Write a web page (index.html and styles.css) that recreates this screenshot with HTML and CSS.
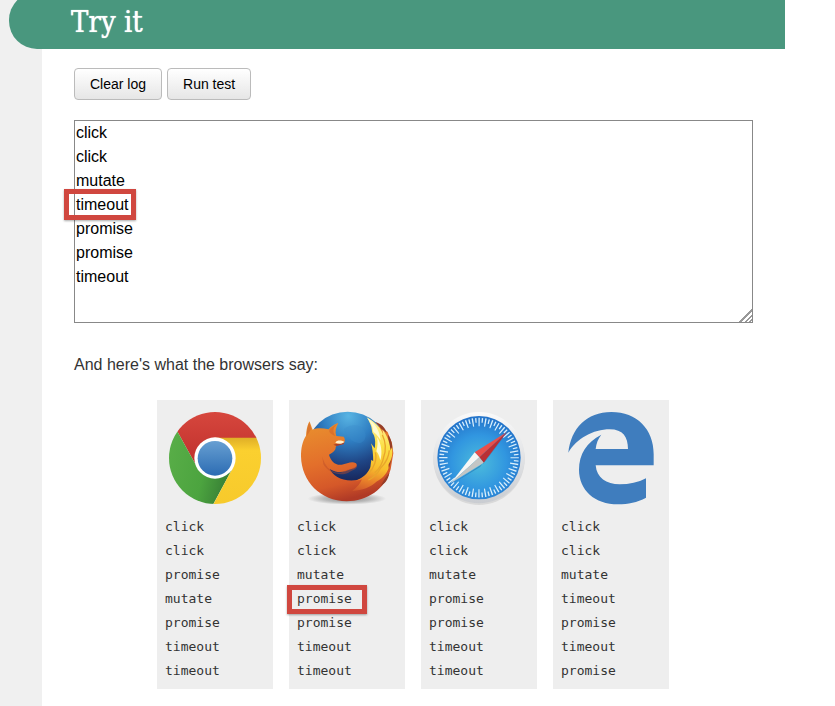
FILE: index.html
```html
<!DOCTYPE html>
<html lang="en">
<head>
<meta charset="utf-8">
<title>Try it</title>
<link rel="stylesheet" href="styles.css">
</head>
<body>
<main class="page">
  <h1 class="banner">Try it</h1>
  <div class="content">
    <div class="actions">
      <button type="button">Clear log</button>
      <button type="button">Run test</button>
    </div>
    <div class="log-wrap">
      <textarea class="log" aria-label="Event log" spellcheck="false">click
click
mutate
timeout
promise
promise
timeout</textarea>
      <span class="log-mark"></span>
    </div>
    <p class="intro">And here's what the browsers say:</p>
    <div class="browsers">
      <section class="browser">
        <svg class="logo" viewBox="24 24 300 300" role="img" aria-label="Chrome">
          <defs>
            <linearGradient id="cr" x1="0" y1="0" x2="0" y2="1"><stop offset="0" stop-color="#d9493f"/><stop offset="1" stop-color="#bd2e2b"/></linearGradient>
            <linearGradient id="cy" x1="0" y1="0" x2="0" y2="1"><stop offset="0" stop-color="#dfae27"/><stop offset=".18" stop-color="#fbd02f"/><stop offset="1" stop-color="#f6c92b"/></linearGradient>
            <linearGradient id="cg" x1="0" y1="0" x2="1" y2=".3"><stop offset="0" stop-color="#5cb04a"/><stop offset=".7" stop-color="#4ca43f"/><stop offset="1" stop-color="#3b8537"/></linearGradient>
            <linearGradient id="cb" x1="0" y1="0" x2="0" y2="1"><stop offset="0" stop-color="#679fd2"/><stop offset="1" stop-color="#2c6cb3"/></linearGradient>
            <clipPath id="cc"><circle cx="174" cy="174" r="138"/></clipPath>
          </defs>
          <g clip-path="url(#cc)">
            <path fill="url(#cr)" d="M20 20H330V114H174L122 205L62 96Z"/>
            <path fill="url(#cg)" d="M62 96L122 205L174 235L226 206L168 314H20V60Z"/>
            <path fill="url(#cy)" d="M174 113H330V330H160L226 206Z"/>
          </g>
          <circle cx="174" cy="174" r="62" fill="#fff"/>
          <circle cx="174" cy="175" r="52" fill="url(#cb)"/>
        </svg>
        <ol class="results"><li>click</li><li>click</li><li>promise</li><li>mutate</li><li>promise</li><li>timeout</li><li>timeout</li></ol>
      </section>
      <section class="browser">
        <svg class="logo" viewBox="24 24 300 300" role="img" aria-label="Firefox">
          <defs>
            <radialGradient id="fb" gradientUnits="userSpaceOnUse" cx="178" cy="48" r="190"><stop offset="0" stop-color="#58b4e3"/><stop offset=".4" stop-color="#2f7ec2"/><stop offset=".75" stop-color="#1f4585"/><stop offset="1" stop-color="#182a60"/></radialGradient>
            <linearGradient id="fo" gradientUnits="userSpaceOnUse" x1="90" y1="64" x2="150" y2="304"><stop offset="0" stop-color="#e98f2e"/><stop offset=".5" stop-color="#e36f2b"/><stop offset=".8" stop-color="#d55829"/><stop offset="1" stop-color="#b03a26"/></linearGradient>
            <linearGradient id="fy" gradientUnits="userSpaceOnUse" x1="275" y1="60" x2="225" y2="275"><stop offset="0" stop-color="#fff3a0"/><stop offset=".35" stop-color="#fbdf45"/><stop offset=".65" stop-color="#f8bd2c"/><stop offset=".85" stop-color="#e8802a"/><stop offset="1" stop-color="#d0582a"/></linearGradient>
            <radialGradient id="fs"><stop offset="0" stop-color="#888"/><stop offset=".6" stop-color="#bbb"/><stop offset="1" stop-color="#eee"/></radialGradient>
          </defs>
          <ellipse cx="174" cy="296" rx="118" ry="18" fill="url(#fs)"/>
          <ellipse cx="176" cy="146" rx="120" ry="111" fill="url(#fb)"/>
          <path fill="#3c8dca" opacity=".35" d="M165 88C182 72 207 72 222 86C234 100 232 122 216 128C196 134 172 112 165 88Z"/>
          <path fill="url(#fo)" d="M61 64C53 80 52 95 51 107C40 124 36 145 36 169C37 244 95 304 173 304C235 304 289 267 305 208L313 160L309 130L296 96L270 76L258 140C256 190 240 232 204 240C160 246 132 228 122 207C150 222 165 216 185 208C202 205 207 197 201 190C188 182 174 192 158 194C137 196 126 183 120 164C130 157 139 153 140 143C139 136 151 135 163 132C169 125 169 116 164 110L142 108C137 95 141 82 148 69C133 74 124 81 119 88C99 84 82 84 71 89C67 80 65 72 61 64Z"/>
          <path fill="#963d27" d="M259 66C277 72 288 82 293 98L280 90ZM297 104C307 116 312 135 309 157L299 132ZM302 180L308 168C307 184 303 198 297 207ZM287 236L301 218C298 238 288 251 276 256Z"/>
          <path fill="url(#fy)" d="M233 52C257 65 275 82 283 104L280 88C296 108 304 132 304 152L309 142C312 164 308 180 298 194L299 204C291 225 279 236 264 244C246 262 219 272 190 272C205 262 214 250 219 238C212 241 206 242 200 242C222 234 237 220 244 202L247 179L253 184C252 162 251 144 246 130L257 145C260 128 259 108 250 98L247 80C243 70 239 60 233 52Z"/>
          <path fill="#fffbd0" d="M235 54C259 70 272 92 275 121C267 107 258 99 253 96C252 81 246 67 235 54ZM264 111C277 130 281 158 274 181C270 165 266 158 262 154C266 140 267 125 264 111Z"/>
          <path fill="none" stroke="#e9a52b" stroke-width="4" d="M280 104C292 130 291 152 284 171C281 190 270 207 257 218M301 151C299 174 289 190 275 204C265 222 251 235 238 240M259 157C265 178 254 205 240 219"/>
          <path fill="#c5562a" d="M61 66L67 86 54 107C53 91 56 77 61 66ZM147 71C132 79 129 94 139 108C122 102 118 94 122 88C130 79 138 75 147 71Z" opacity=".4"/>
          <path fill="#a63c29" d="M133 134L163 127 165 132 143 138Z"/>
          <path fill="#fff0c9" d="M139 128C146 118 157 122 166 125C160 132 150 133 139 128Z"/>
          <path fill="#bb4b2b" d="M100 169C106 201 132 226 163 215C180 206 195 207 203 196C207 206 194 210 183 215C159 231 120 222 103 193Z" opacity=".45"/>
        </svg>
        <ol class="results"><li>click</li><li>click</li><li>mutate</li><li class="marked">promise</li><li>promise</li><li>timeout</li><li>timeout</li></ol>
      </section>
      <section class="browser">
        <svg class="logo" viewBox="24 24 300 300" role="img" aria-label="Safari">
          <defs>
            <radialGradient id="sb" cx=".5" cy=".56" r=".6"><stop offset="0" stop-color="#4cbcdc"/><stop offset=".55" stop-color="#3196e0"/><stop offset="1" stop-color="#216cc5"/></radialGradient>
            <linearGradient id="sr" x1="0" y1="0" x2="0" y2="1"><stop offset="0" stop-color="#fafafa"/><stop offset="1" stop-color="#c9ccd1"/></linearGradient>
          </defs>
          <circle cx="174" cy="178" r="137" fill="#c9c9c9" opacity=".55"/>
          <circle cx="174" cy="173" r="137" fill="url(#sr)"/>
          <circle cx="174" cy="173" r="125" fill="url(#sb)"/>
          <circle cx="174" cy="173" r="107" fill="none" stroke="#d9effc" stroke-width="25" pathLength="360" stroke-dasharray="2 8" stroke-dashoffset="1"/>
          <circle cx="174" cy="173" r="112" fill="none" stroke="#d9effc" stroke-width="14" pathLength="360" stroke-dasharray="2 8" stroke-dashoffset="-4"/>
          <path fill="#174f94" opacity=".4" d="M92 252L188 190L258 98L177 201Z"/>
          <path fill="#e84f4b" d="M258 96L161 157L175 172Z"/>
          <path fill="#b92f35" d="M258 96L175 172L188 188Z"/>
          <path fill="#f7f7f5" d="M89 250L161 157L175 172Z"/>
          <path fill="#c3c6c5" d="M89 250L175 172L188 188Z"/>
        </svg>
        <ol class="results"><li>click</li><li>click</li><li>mutate</li><li>promise</li><li>promise</li><li>timeout</li><li>timeout</li></ol>
      </section>
      <section class="browser">
        <svg class="logo" viewBox="24 24 300 300" role="img" aria-label="Edge">
          <path fill="#3f7dbe" fill-rule="evenodd" d="M46 158C54 85 101 36 175 36C252 36 302 88 302 162V196H128C131 234 160 253 200 253C229 253 256 247 279 235V293C252 307 226 313 195 313C125 313 78 270 78 209C78 163 101 126 145 104C135 116 130 130 128 147H225C225 111 210 88 170 88C121 88 70 116 46 158Z"/>
        </svg>
        <ol class="results"><li>click</li><li>click</li><li>mutate</li><li>timeout</li><li>promise</li><li>timeout</li><li>promise</li></ol>
      </section>
    </div>
  </div>
</main>
</body>
</html>
```
FILE: styles.css
```css
*,
*::after {
  box-sizing: border-box;
}

body {
  margin: 0;
  background: #f0f0f0;
  color: #333;
  font: 16px/24px "Liberation Sans", Arial, sans-serif;
}

.page {
  display: flow-root;
  min-height: 100vh;
  margin-left: 42px;
  background: #fff;
}

.banner {
  margin: -8px 50px 0 -33px;
  padding: 10px 0 6px 62px;
  border-radius: 28px 0 0 28px;
  background: #49977e;
  color: #fff;
  font: 29px/41px "DejaVu Serif Condensed", "DejaVu Serif", serif;
  text-shadow: 0 0 1px #fff;
}

.content {
  padding: 19px 82px 16px 32px;
}

.actions {
  display: flex;
  gap: 5px;
}

.actions button {
  height: 32px;
  padding: 0 15px;
  border: 1px solid #bbb;
  border-radius: 4px;
  background: linear-gradient(#fff, #e6e6e6);
  color: #000;
  font: 14px/20px "Liberation Sans", Arial, sans-serif;
}

.log-wrap {
  position: relative;
  margin-top: 20px;
}

.log {
  display: block;
  width: 100%;
  height: 203px;
  padding: 0 1px;
  border: 1px solid #888;
  border-radius: 0;
  background: #fff;
  color: #000;
  font: inherit;
  resize: both;
}

.log::-webkit-resizer {
  background: linear-gradient(135deg, #fff 12px, #999 12px 14px, #fff 14px 16px, #999 16px 17px, #fff 17px 19px, #999 19px 20px, #fff 20px);
}

.log-mark,
.marked::after {
  position: absolute;
  border: 5px solid #d0473f;
  box-shadow: 0 1px 2px #0005;
  pointer-events: none;
}

.log-mark {
  top: 69px;
  left: -10px;
  width: 72px;
  height: 31px;
}

.intro {
  margin: 30px 0 23px;
}

.browsers {
  display: flex;
  justify-content: center;
  gap: 16px;
  padding-right: 1px;
}

.browser {
  width: 116px;
  padding: 8px 8px 6px;
  background: #eee;
}

.logo {
  display: block;
  width: 100%;
}

.results {
  margin: 7px 0 0;
  padding: 0;
  list-style: none;
  font: 13px/24px "DejaVu Sans Mono", monospace;
}

.marked {
  position: relative;
}

.marked::after {
  content: "";
  top: -2px;
  left: -10px;
  width: 80px;
  height: 29px;
}
```
